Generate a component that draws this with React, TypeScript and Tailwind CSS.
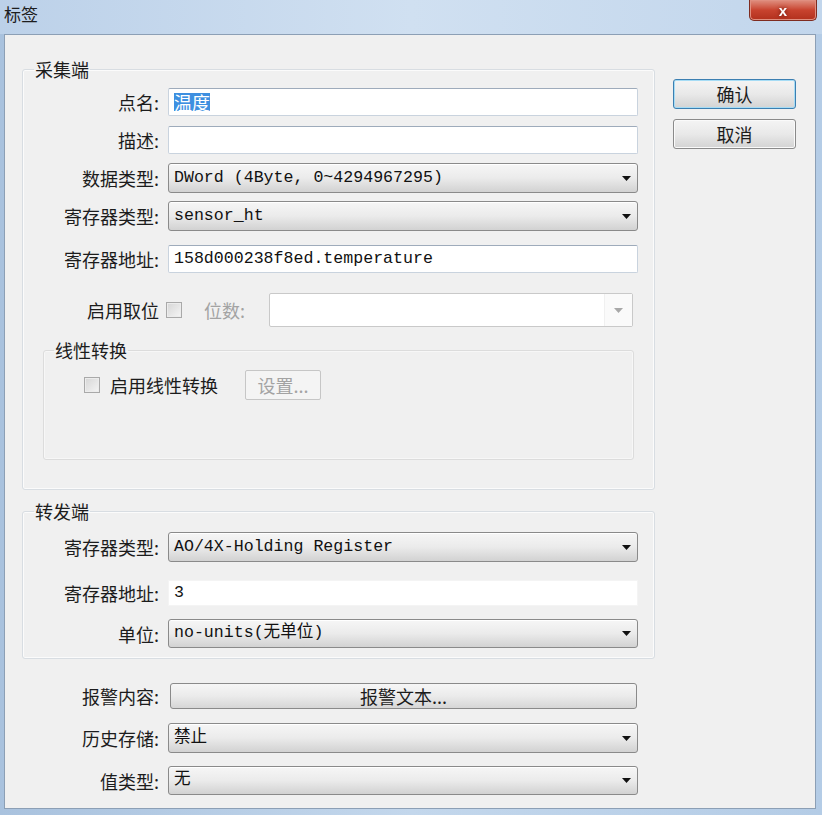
import React from "react";

const CJK = "font-['Noto_Sans_CJK_SC','Noto_Sans',sans-serif]";

function Arrow({ color = "#111" }: { color?: string }) {
  return (
    <svg width="9" height="5" viewBox="0 0 9 5" className="shrink-0">
      <path d="M0 0H9L4.5 5Z" fill={color} />
    </svg>
  );
}

function Select({ value, h }: { value: string; h: string }) {
  return (
    <div
      className={`flex items-center w-[470px] ${h} border border-[#8a8a8a] rounded-[3px] bg-gradient-to-b from-[#f6f6f6] via-[#ebebeb] to-[#d2d2d2] pl-[5px] pr-[6px] shadow-[inset_0_1px_0_#ffffff]`}
    >
      <span className="flex-1 font-['Liberation_Mono','Noto_Sans_CJK_SC',monospace] text-[16.6px] leading-none text-[#111] whitespace-pre">
        {value}
      </span>
      <Arrow />
    </div>
  );
}

function Input({ children, h }: { children?: React.ReactNode; h: string }) {
  return (
    <div
      className={`flex items-center w-[470px] ${h} bg-white border border-[#c9d3de] border-t-[#9eabbb] rounded-[2px] pl-[5px] font-['Liberation_Mono','Noto_Sans_CJK_SC',monospace] text-[16.6px] leading-none text-[#111] whitespace-pre`}
    >
      {children}
    </div>
  );
}

function Label({ text, w }: { text: string; w: string }) {
  return (
    <span className={`${w} shrink-0 text-right text-[18px] leading-none text-[#1c1c1c]`}>{text}</span>
  );
}

function Checkbox() {
  return (
    <span className="block w-[16px] h-[16px] shrink-0 border border-[#a9a9a9] bg-gradient-to-br from-[#d6d6d6] to-[#f5f5f5] shadow-[inset_0_0_0_1px_#ececec]" />
  );
}

function WinButton({ text, focus }: { text: string; focus?: boolean }) {
  return (
    <div
      className={`w-[123px] h-[30px] flex items-center justify-center rounded-[3px] border ${
        focus ? "border-[#3c7fb1] shadow-[inset_0_0_0_1px_#a6dcf5]" : "border-[#8a8a8a] shadow-[inset_0_0_0_1px_#fafafa]"
      } bg-gradient-to-b from-[#f4f4f4] via-[#e9e9e9] to-[#d3d3d3] text-[18px] leading-none text-[#1c1c1c]`}
    >
      {text}
    </div>
  );
}

export default function App() {
  return (
    <div
      className={`w-[822px] h-[815px] flex flex-col bg-gradient-to-r from-[#a9c2de] via-[#c3d7ec] to-[#b4cce6] ${CJK}`}
    >
      {/* title bar */}
      <div className="h-[34px] shrink-0 flex items-start justify-between bg-gradient-to-r from-[#bcd1e9] via-[#d0e0f1] to-[#c2d6ec]">
        <span className="pl-[4px] pt-[5px] text-[17px] leading-none text-[#1e1e1e]">标签</span>
        <div className="mr-[5px] w-[68px] h-[21px] flex items-center justify-center rounded-b-[5px] border border-t-0 border-[#7e2c20] bg-gradient-to-b from-[#df8f80] via-[#c8432f] to-[#b2301d] shadow-[inset_0_0_0_1px_#e08f80]">
          <span className="text-white text-[15px] font-bold leading-none font-['Liberation_Sans',sans-serif] drop-shadow-[0_0_2px_#6a1208]">x</span>
        </div>
      </div>

      {/* client */}
      <div className="ml-[4px] mr-[6px] mb-[6px] flex-1 flex border border-[#8c9fb5] bg-[#f0f0f0]">
        {/* left column */}
        <div className="w-[650px] pl-[17px] pt-[25px] flex flex-col">
          {/* 采集端 */}
          <fieldset className="w-[633px] border border-[#d8dde2] rounded-[3px] pb-[29px] shadow-[inset_0_0_0_1px_#fbfbfb]">
            <legend className="ml-[11px] px-[1px] text-[18px] leading-[18px] text-[#1c1c1c]">采集端</legend>
            <div className="flex items-center mt-[10px]">
              <Label text="点名:" w="w-[136px]" />
              <div className="ml-[9px]">
                <Input h="h-[28px]">
                  <span className={`${CJK} text-[18px] bg-[#3d8fe0] text-white leading-[18px]`}>温度</span>
                </Input>
              </div>
            </div>
            <div className="flex items-center mt-[10px]">
              <Label text="描述:" w="w-[136px]" />
              <div className="ml-[9px]">
                <Input h="h-[28px]" />
              </div>
            </div>
            <div className="flex items-center mt-[9px]">
              <Label text="数据类型:" w="w-[136px]" />
              <div className="ml-[9px]">
                <Select value="DWord (4Byte, 0~4294967295)" h="h-[30px]" />
              </div>
            </div>
            <div className="flex items-center mt-[8px]">
              <Label text="寄存器类型:" w="w-[136px]" />
              <div className="ml-[9px]">
                <Select value="sensor_ht" h="h-[30px]" />
              </div>
            </div>
            <div className="flex items-center mt-[14px]">
              <Label text="寄存器地址:" w="w-[136px]" />
              <div className="ml-[9px]">
                <Input h="h-[28px]">158d000238f8ed.temperature</Input>
              </div>
            </div>
            <div className="flex items-center mt-[20px] h-[34px]">
              <Label text="启用取位" w="w-[136px]" />
              <div className="ml-[7px]">
                <Checkbox />
              </div>
              <span className="ml-[22px] w-[65px] shrink-0 text-[18px] leading-none text-[#a3a3a3]">位数:</span>
              <div className="w-[364px] h-[34px] flex items-center border border-[#c9c9c9] bg-white rounded-[2px]">
                <div className="flex-1" />
                <div className="w-[28px] h-full flex items-center justify-center border-l border-[#f0f0f0] bg-[#fafafa]">
                  <Arrow color="#a8a8a8" />
                </div>
              </div>
            </div>

            {/* 线性转换 */}
            <fieldset className="mt-[14px] mx-[20px] border border-[#dcdcdc] rounded-[3px] pt-[11px] pb-[59px] shadow-[inset_0_0_0_1px_#f7f7f7]">
              <legend className="ml-[10px] px-[1px] text-[18px] leading-[18px] text-[#1c1c1c]">线性转换</legend>
              <div className="flex items-center h-[30px] pl-[40px]">
                <Checkbox />
                <span className="ml-[10px] text-[18px] leading-none text-[#1c1c1c]">启用线性转换</span>
                <div className="ml-[27px] w-[76px] h-[30px] flex items-center justify-center border border-[#c6c6c6] rounded-[2px] bg-[#f4f4f4] text-[18px] leading-none text-[#a3a3a3]">
                  设置...
                </div>
              </div>
            </fieldset>
          </fieldset>

          {/* 转发端 */}
          <fieldset className="mt-[12px] w-[633px] border border-[#d8dde2] rounded-[3px] pt-[12px] pb-[10px] shadow-[inset_0_0_0_1px_#fbfbfb]">
            <legend className="ml-[11px] px-[1px] text-[18px] leading-[18px] text-[#1c1c1c]">转发端</legend>
            <div className="flex items-center">
              <Label text="寄存器类型:" w="w-[136px]" />
              <div className="ml-[9px]">
                <Select value="AO/4X-Holding Register" h="h-[30px]" />
              </div>
            </div>
            <div className="flex items-center mt-[18px]">
              <Label text="寄存器地址:" w="w-[136px]" />
              <div className="ml-[9px]">
                <div className="flex items-center w-[470px] h-[26px] bg-white border border-[#f4f4f4] pl-[5px] font-['Liberation_Mono',monospace] text-[16.6px] leading-none text-[#111]">
                  3
                </div>
              </div>
            </div>
            <div className="flex items-center mt-[13px]">
              <Label text="单位:" w="w-[136px]" />
              <div className="ml-[9px]">
                <Select value="no-units(无单位)" h="h-[29px]" />
              </div>
            </div>
          </fieldset>

          {/* bottom rows */}
          <div className="flex items-center mt-[24px]">
            <Label text="报警内容:" w="w-[137px]" />
            <div className="ml-[11px] w-[467px] h-[26px] flex items-center justify-center border border-[#8a8a8a] rounded-[3px] bg-gradient-to-b from-[#f6f6f6] via-[#ebebeb] to-[#d6d6d6] text-[18px] leading-none text-[#1c1c1c]">
              报警文本...
            </div>
          </div>
          <div className="flex items-center mt-[14px]">
            <Label text="历史存储:" w="w-[137px]" />
            <div className="ml-[9px]">
              <Select value="禁止" h="h-[30px]" />
            </div>
          </div>
          <div className="flex items-center mt-[13px]">
            <Label text="值类型:" w="w-[137px]" />
            <div className="ml-[9px]">
              <Select value="无" h="h-[29px]" />
            </div>
          </div>
        </div>

        {/* right column */}
        <div className="ml-[18px] pt-[44px] flex flex-col gap-[10px]">
          <WinButton text="确认" focus />
          <WinButton text="取消" />
        </div>
      </div>
    </div>
  );
}
